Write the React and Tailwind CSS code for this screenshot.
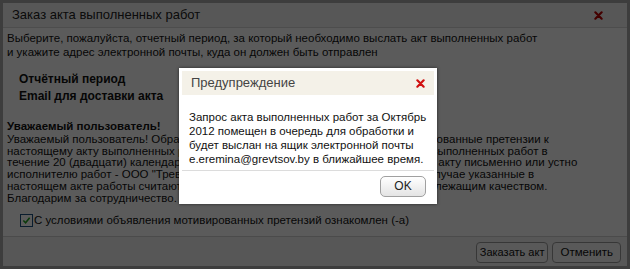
import React from 'react';

const font = { fontFamily: '"Liberation Sans", Arial, sans-serif' };

const letterLines = [
  'Уважаемый пользователь! Обращаем внимание, что Вы вправе подать мотивированные претензии к',
  'настоящему акту выполненных работ в случае несогласия с настоящим актом выполненных работ в',
  'течение 20 (двадцати) календарных дней с даты акта. Претензии к настоящему акту письменно или устно',
  'исполнителю работ - ООО "Тревоцовъ" по адресу электр. почты. В противном случае указанные в',
  'настоящем акте работы считаются выполненными исполнителем в срок и с надлежащим качеством.',
  'Благодарим за сотрудничество.',
];

function XIcon({ className }) {
  return (
    <svg viewBox="0 0 10 10" className={className}>
      <path d="M1.5 1.5 L8.5 8.5 M8.5 1.5 L1.5 8.5" stroke="currentColor" strokeWidth="2.4" strokeLinecap="round" />
    </svg>
  );
}

function OrderDialog() {
  return (
    <div className="h-[269px] w-[630px] bg-[#a8a8a8] p-[3px] flex flex-col text-[11.5px] text-[#111]">
      {/* заголовок */}
      <div className="h-[25px] flex items-center justify-between px-[9px] bg-[#f2f2f2] border-b border-[#d6d6d6]">
        <span className="text-[13px] text-[#222]">Заказ акта выполненных работ</span>
        <XIcon className="w-[9px] h-[9px] text-[#b00] mr-[15px]" />
      </div>

      <div className="flex-1 bg-[#fdfdfd] px-[4px] pt-[3px] flex flex-col">
        <p className="leading-[14px]">
          Выберите, пожалуйста, отчетный период, за который необходимо выслать акт выполненных работ
          <br />и укажите адрес электронной почты, куда он должен быть отправлен
        </p>

        <div className="pl-[12px] pt-[13px] font-bold text-[12px] flex flex-col gap-[3px] leading-[14px]">
          <span>Отчётный период</span>
          <span>Email для доставки акта</span>
        </div>

        <div className="pt-[18px] leading-[11.8px]">
          <div className="font-bold mb-[1px]">Уважаемый пользователь!</div>
          {letterLines.map((l, i) => (
            <div key={i} className="whitespace-nowrap">{l}</div>
          ))}
        </div>

        <label className="flex items-center gap-[1px] pl-[13px] pt-[7px]">
          <span className="w-[13px] h-[13px] border border-[#1c5180] bg-white flex items-center justify-center">
            <svg viewBox="0 0 10 10" className="w-[9px] h-[9px]">
              <path d="M1.5 5 L4 7.5 L8.5 2" fill="none" stroke="#21a121" strokeWidth="1.8" />
            </svg>
          </span>
          <span>С условиями объявления мотивированных претензий ознакомлен (-а)</span>
        </label>
      </div>

      {/* кнопки */}
      <div className="h-[30px] border-t border-[#cfcfcf] bg-[#f1f1f1] flex items-center justify-end gap-[4px] pr-[6px] pt-[2px]">
        <button className="h-[21px] px-[3px] rounded-[4px] border border-[#9a9a9a] bg-[#f6f6f6] text-[11px]">Заказать акт</button>
        <button className="h-[21px] px-[7px] rounded-[4px] border border-[#9a9a9a] bg-[#f6f6f6] text-[11.5px]">Отменить</button>
      </div>
    </div>
  );
}

function WarningModal() {
  return (
    <div className="absolute left-[179px] top-[68px] w-[258px] h-[136px] bg-white p-[3px] flex flex-col shadow-[0_0_3px_rgba(0,0,0,0.6)]">
      <div className="h-[24px] bg-[#f4f1e8] flex items-center justify-between px-[9px]">
        <span className="text-[13px] text-[#444]">Предупреждение</span>
        <XIcon className="w-[9px] h-[9px] text-[#d01010]" />
      </div>
      <p className="px-[7px] pt-[15px] text-[11.5px] leading-[14px] text-[#111] h-[75px]">
        Запрос акта выполненных работ за Октябрь 2012 помещен в очередь для обработки и будет выслан на ящик электронной почты e.eremina@grevtsov.by в ближайшее время.
      </p>
      <div className="border-t border-[#dcdcdc] flex-1 flex items-center justify-end pr-[8px]">
        <button className="w-[46px] h-[21px] rounded-[5px] border border-[#a0a0a0] bg-gradient-to-b from-white to-[#e4e4e4] text-[12px] text-[#222]">OK</button>
      </div>
    </div>
  );
}

export default function App() {
  return (
    <div className="relative w-[630px] h-[269px] overflow-hidden" style={font}>
      <OrderDialog />
      <div className="absolute inset-0 bg-black/[0.64]" />
      <WarningModal />
    </div>
  );
}
